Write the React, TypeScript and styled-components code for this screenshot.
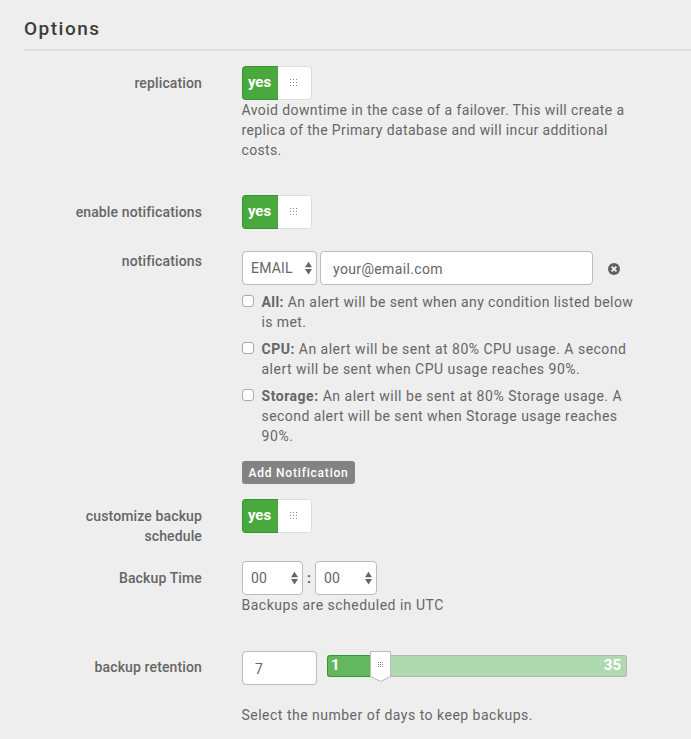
import React, { ReactNode } from "react";
import styled, { createGlobalStyle } from "styled-components";

const GlobalStyle = createGlobalStyle`
  *, *::before, *::after { box-sizing: border-box; }
  body {
    margin: 0;
    background: #eee;
    color: #666;
    font: 14px/20px Roboto, "Liberation Sans", sans-serif;
    letter-spacing: 0.33px;
    overflow: hidden;
  }
`;

const Page = styled.main`
  height: 739px;
  padding: 8px 0 0 24px;
  overflow: hidden;
`;

const Heading = styled.h2`
  height: 43px;
  margin: 0 0 15px;
  border-bottom: 2px solid #dedede;
  color: #3c3c3c;
  font-size: 19px;
  font-weight: 500;
  line-height: 41px;
  letter-spacing: 1.5px;
`;

const FormRow = styled.div<{ $gap: number }>`
  display: grid;
  grid-template-columns: 178px 400px;
  column-gap: 40px;
  align-items: start;
  margin-bottom: ${(p) => p.$gap}px;
`;

const Label = styled.div<{ $top?: number }>`
  padding-top: ${(p) => p.$top ?? 7}px;
  font-weight: 500;
  letter-spacing: 0.13px;
  text-align: right;
`;

const Help = styled.p<{ $top?: number }>`
  margin: ${(p) => p.$top ?? 0}px 0 0 -0.5px;
`;

const Line = styled.span<{ $spacing: number }>`
  display: block;
  white-space: nowrap;
  letter-spacing: ${(p) => p.$spacing}px;
`;

const Toggle = styled.button`
  display: flex;
  width: 70px;
  height: 34px;
  padding: 0;
  border: 0;
  border-radius: 4px;
  background: #fff;
  font: inherit;
`;

const ToggleOn = styled.span`
  width: 36px;
  height: 34px;
  padding-right: 2px;
  border: 1px solid #389432;
  border-right: 0;
  border-radius: 4px 0 0 4px;
  background: #4aa93d;
  color: #fff;
  font-weight: 700;
  font-size: 15px;
  line-height: 31px;
  letter-spacing: -0.05px;
  text-align: center;
`;

const ToggleKnob = styled.span`
  display: flex;
  align-items: center;
  width: 34px;
  height: 34px;
  padding: 0 0 1px 12px;
  border: 1px solid #ddd;
  border-left: 0;
  border-radius: 0 4px 4px 0;
`;

const Inline = styled.div`
  display: flex;
  align-items: center;
`;

const SelectBox = styled.div<{ $width: number }>`
  display: flex;
  align-items: center;
  justify-content: space-between;
  width: ${(p) => p.$width}px;
  height: 34px;
  padding: 0 4px 1px 8px;
  border: 1px solid #bbb;
  border-radius: 4px;
  background: #fff;
  letter-spacing: 0.2px;
`;

const TextField = styled.input<{ $width: number; $left?: number }>`
  width: ${(p) => p.$width}px;
  height: 34px;
  margin: 0 0 0 ${(p) => p.$left ?? 0}px;
  padding: 2px 12px 0;
  border: 1px solid #bbb;
  border-radius: 4px;
  outline: 0;
  background: #fff;
  color: #666;
  font: inherit;
  letter-spacing: 0.36px;
`;

const RemoveButton = styled.button`
  display: flex;
  margin: 1px 0 0 15px;
  padding: 0;
  border: 0;
  background: none;
`;

const CheckList = styled.div`
  display: grid;
  row-gap: 7px;
  padding-top: 7px;
`;

const CheckItem = styled.label`
  display: grid;
  grid-template-columns: 12px 1fr;
  column-gap: 7.5px;
`;

const Checkbox = styled.input`
  appearance: none;
  width: 12px;
  height: 12px;
  margin: 3px 0 0;
  border: 1px solid #aaa;
  border-radius: 3px;
  background: #fff;
`;

const AddButton = styled.button`
  display: block;
  width: 113px;
  height: 23px;
  margin-top: 15px;
  padding: 1px 0 0;
  border: 0;
  border-radius: 3px;
  background: #838383;
  color: #fff;
  font: 500 12px/22px Roboto, sans-serif;
  letter-spacing: 0.8px;
`;

const Colon = styled.span`
  width: 12px;
  padding-left: 4px;
  font-weight: 700;
`;

const Slider = styled.div`
  position: relative;
  display: flex;
  width: 300px;
  height: 22px;
  margin: -4px 0 0 10px;
  color: #fff;
  font-size: 15px;
  font-weight: 700;
  line-height: 19px;
  letter-spacing: 0;
`;

const SliderFill = styled.div`
  width: 53px;
  padding-left: 3px;
  border: 1px solid #37962f;
  border-right: 0;
  border-radius: 3px 0 0 3px;
  background: #63b75e;
`;

const SliderRest = styled.div`
  flex: 1;
  padding-right: 5px;
  border: 1px solid #b5b5b5;
  border-left: 0;
  border-radius: 0 3px 3px 0;
  background: #afdab1;
  text-align: right;
`;

const SliderHandle = styled.svg`
  position: absolute;
  left: 43px;
  top: -4px;
`;

const dots = [0, 3, 6];

function Grip() {
  return (
    <svg width="8" height="8" viewBox="0 0 8 8" shapeRendering="crispEdges">
      {dots.map((y) => dots.map((x) => <rect key={`${x}-${y}`} x={x} y={y} width="1" height="1" fill="#888" />))}
    </svg>
  );
}

function YesToggle() {
  return (
    <Toggle type="button">
      <ToggleOn>yes</ToggleOn>
      <ToggleKnob><Grip /></ToggleKnob>
    </Toggle>
  );
}

function Select({ width, children }: { width: number; children: ReactNode }) {
  return (
    <SelectBox $width={width}>
      {children}
      <svg width="7" height="14" viewBox="0 0 7 14" fill="#666">
        <path d="M3.5 .8 7 6.2H0zM3.5 13.4 7 8H0z" />
      </svg>
    </SelectBox>
  );
}

export default function App() {
  return (
    <>
      <GlobalStyle />
      <Page>
        <Heading>Options</Heading>
        <FormRow $gap={35}>
          <Label>replication</Label>
          <div>
            <YesToggle />
            <Help>
              <Line $spacing={0.41}>Avoid downtime in the case of a failover. This will create a</Line>
              <Line $spacing={0.38}>replica of the Primary database and will incur additional</Line>
              <Line $spacing={0.33}>costs.</Line>
            </Help>
          </div>
        </FormRow>
        <FormRow $gap={22}>
          <Label>enable notifications</Label>
          <YesToggle />
        </FormRow>
        <FormRow $gap={15}>
          <Label $top={0}>notifications</Label>
          <div>
            <Inline>
              <Select width={75}>EMAIL</Select>
              <TextField $width={273} $left={3} defaultValue="your@email.com" />
              <RemoveButton type="button" aria-label="Remove">
                <svg width="12" height="12" viewBox="0 0 12 12">
                  <circle cx="6" cy="6" r="6" fill="#606060" />
                  <path d="M3.6 3.6 8.4 8.4M8.4 3.6 3.6 8.4" stroke="#eee" strokeWidth="2" />
                </svg>
              </RemoveButton>
            </Inline>
            <CheckList>
              <CheckItem>
                <Checkbox type="checkbox" />
                <span>
                  <Line $spacing={0.41}><b>All:</b> An alert will be sent when any condition listed below</Line>
                  <Line $spacing={0.41}>is met.</Line>
                </span>
              </CheckItem>
              <CheckItem>
                <Checkbox type="checkbox" />
                <span>
                  <Line $spacing={0.49}><b>CPU:</b> An alert will be sent at 80% CPU usage. A second</Line>
                  <Line $spacing={0.49}>alert will be sent when CPU usage reaches 90%.</Line>
                </span>
              </CheckItem>
              <CheckItem>
                <Checkbox type="checkbox" />
                <span>
                  <Line $spacing={0.52}><b>Storage:</b> An alert will be sent at 80% Storage usage. A</Line>
                  <Line $spacing={0.44}>second alert will be sent when Storage usage reaches</Line>
                  <Line $spacing={0.6}>90%.</Line>
                </span>
              </CheckItem>
            </CheckList>
            <AddButton type="button">Add Notification</AddButton>
          </div>
        </FormRow>
        <FormRow $gap={15}>
          <Label>customize backup<br />schedule</Label>
          <YesToggle />
        </FormRow>
        <FormRow $gap={36}>
          <Label>Backup Time</Label>
          <div>
            <Inline>
              <Select width={61}>00</Select>
              <Colon>:</Colon>
              <Select width={62}>00</Select>
            </Inline>
            <Help><Line $spacing={0.49}>Backups are scheduled in UTC</Line></Help>
          </div>
        </FormRow>
        <FormRow $gap={0}>
          <Label $top={6}>backup retention</Label>
          <div>
            <Inline>
              <TextField $width={75} defaultValue="7" />
              <Slider>
                <SliderFill>1</SliderFill>
                <SliderRest>35</SliderRest>
                <SliderHandle width="21" height="32" viewBox="0 0 21 32">
                  <path d="M.5.5h20v25L10.5 30.5.5 25.5z" fill="#fff" stroke="#bbb" />
                  {[11, 13, 15].map((y) => [8, 10, 12].map((x) => (
                    <rect key={`${x}-${y}`} x={x} y={y} width="1" height="1" fill="#888" />
                  )))}
                </SliderHandle>
              </Slider>
            </Inline>
            <Help $top={20}><Line $spacing={0.49}>Select the number of days to keep backups.</Line></Help>
          </div>
        </FormRow>
      </Page>
    </>
  );
}
